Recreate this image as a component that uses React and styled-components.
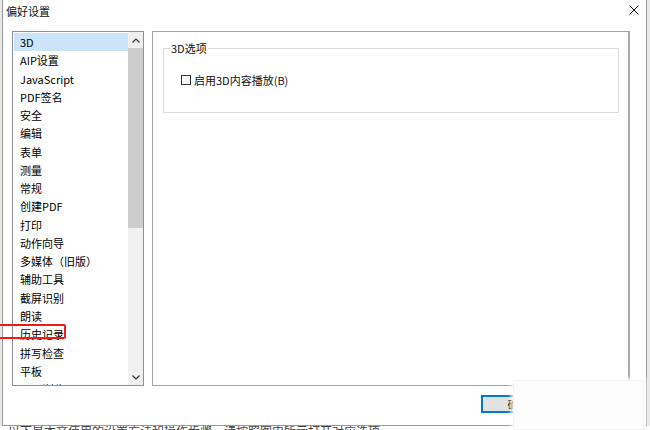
import React from "react";
import styled, { createGlobalStyle } from "styled-components";

const items = [
  "3D",
  "AIP设置",
  "JavaScript",
  "PDF签名",
  "安全",
  "编辑",
  "表单",
  "测量",
  "常规",
  "创建PDF",
  "打印",
  "动作向导",
  "多媒体（旧版）",
  "辅助工具",
  "截屏识别",
  "朗读",
  "历史记录",
  "拼写检查",
  "平板",
  "Web浏览",
];

const App = () => {
  return (
    <Screen>
      <GlobalStyle />
      <Dialog>
        <TitleBar>
          <Title>偏好设置</Title>
          <CloseButton>
            <svg width="10" height="10" viewBox="0 0 10 10">
              <path d="M0.5 0.5 L9.5 9.5 M9.5 0.5 L0.5 9.5" stroke="#111" strokeWidth="1" />
            </svg>
          </CloseButton>
        </TitleBar>
        <Body>
          <ListBox>
            <Items>
              {items.map((item, i) => (
                <Item key={item} selected={i === 0}>
                  {item}
                </Item>
              ))}
            </Items>
            <ScrollBar>
              <Arrow>
                <svg width="8" height="5" viewBox="0 0 8 5">
                  <path d="M0.5 4.5 L4 1 L7.5 4.5" fill="none" stroke="#333" strokeWidth="1.2" />
                </svg>
              </Arrow>
              <Track>
                <Thumb />
              </Track>
              <Arrow>
                <svg width="8" height="5" viewBox="0 0 8 5">
                  <path d="M0.5 0.5 L4 4 L7.5 0.5" fill="none" stroke="#333" strokeWidth="1.2" />
                </svg>
              </Arrow>
            </ScrollBar>
          </ListBox>
          <Panel>
            <Group>
              <Legend>3D选项</Legend>
              <CheckRow>
                <CheckBox />
                <span>启用3D内容播放(B)</span>
              </CheckRow>
            </Group>
          </Panel>
        </Body>
        <Footer>
          <OkButton>确定</OkButton>
          <OkButton>取消</OkButton>
        </Footer>
      </Dialog>
      <BehindText>以下是本文使用的设置方法和操作步骤，请按照图中所示打开对应选项</BehindText>
      <Mark />
      <Watermark />
    </Screen>
  );
};

export default App;

const GlobalStyle = createGlobalStyle`
  html, body {
    margin: 0;
    padding: 0;
    background: #ffffff;
    overflow: hidden;
  }
  * {
    box-sizing: border-box;
  }
`;

const Screen = styled.div`
  position: relative;
  width: 650px;
  height: 430px;
  overflow: hidden;
  background: #e9e9e9;
  font-family: "Noto Sans CJK SC", "Microsoft YaHei", sans-serif;
  font-size: 11px;
  color: #111;
`;

const Dialog = styled.div`
  display: flex;
  flex-direction: column;
  margin-left: 2px;
  width: 645px;
  height: 426px;
  background: #ffffff;
  border: 1px solid #9a9a9a;
  border-top: none;
`;

const TitleBar = styled.div`
  display: flex;
  align-items: center;
  justify-content: space-between;
  height: 23px;
  padding: 0 7px 0 3px;
`;

const Title = styled.div`
  font-size: 11px;
  line-height: 14px;
  margin-top: -2px;
`;

const CloseButton = styled.div`
  display: flex;
  width: 10px;
  height: 10px;
  margin-top: -3px;
`;

const Body = styled.div`
  display: flex;
  gap: 8px;
  padding: 8px 0 0 9px;
`;

const ListBox = styled.div`
  display: flex;
  width: 132px;
  height: 355px;
  border: 1px solid #8c8f96;
  padding: 0 0 0 1px;
  background: #ffffff;
`;

const Items = styled.div`
  flex: 1;
  overflow: hidden;
  padding-top: 1px;
`;

const Item = styled.div`
  height: 18.28px;
  line-height: 19px;
  padding-left: 6px;
  white-space: nowrap;
  color: #000;
  background: ${(p) => (p.selected ? "#cce4fb" : "transparent")};
`;

const ScrollBar = styled.div`
  display: flex;
  flex-direction: column;
  width: 15px;
  background: #f0f0f0;
`;

const Arrow = styled.div`
  display: flex;
  align-items: center;
  justify-content: center;
  height: 16px;
`;

const Track = styled.div`
  flex: 1;
`;

const Thumb = styled.div`
  height: 180px;
  background: #cdcdcd;
`;

const Panel = styled.div`
  width: 478px;
  height: 355px;
  border: 1px solid #a3a3a3;
  border-right: 2px solid #a8a8b0;
  padding: 9px 9px 0 10px;
`;

const Group = styled.fieldset`
  margin: 0;
  height: 72px;
  min-width: 0;
  padding: 0 0 0 17px;
  border: 1px solid #dcdcdc;
`;

const Legend = styled.legend`
  margin-left: -11px;
  padding: 0 1px;
  line-height: 14px;
  font-size: 11px;
`;

const CheckRow = styled.div`
  display: flex;
  align-items: center;
  gap: 3px;
  margin-top: 19px;
  line-height: 12px;
`;

const CheckBox = styled.span`
  display: inline-block;
  width: 10px;
  height: 10px;
  border: 1px solid #333;
  background: #fff;
`;

const Footer = styled.div`
  display: flex;
  gap: 8px;
  padding: 9px 0 0 478px;
`;

const OkButton = styled.div`
  display: flex;
  align-items: center;
  justify-content: center;
  width: 75px;
  height: 18px;
  background: #e1e1e1;
  border: 2px solid #0078d7;
  font-size: 11px;
`;

const BehindText = styled.div`
  height: 4px;
  overflow: hidden;
  padding-left: 8px;
  line-height: 10px;
  font-size: 12px;
  color: #444;
  white-space: nowrap;
  background: #ffffff;
`;

const Mark = styled.div`
  position: absolute;
  left: -3px;
  top: 324px;
  width: 69px;
  height: 15px;
  border: 2px solid #f01818;
  border-radius: 2px;
`;

const Watermark = styled.div`
  position: absolute;
  left: 513px;
  bottom: 0;
  width: 131px;
  height: 50px;
  background: #fdfdfd;
  box-shadow: 0 0 4px 2px rgba(255, 255, 255, 0.9), inset 0 0 0 1px #f4f4f4;
`;
